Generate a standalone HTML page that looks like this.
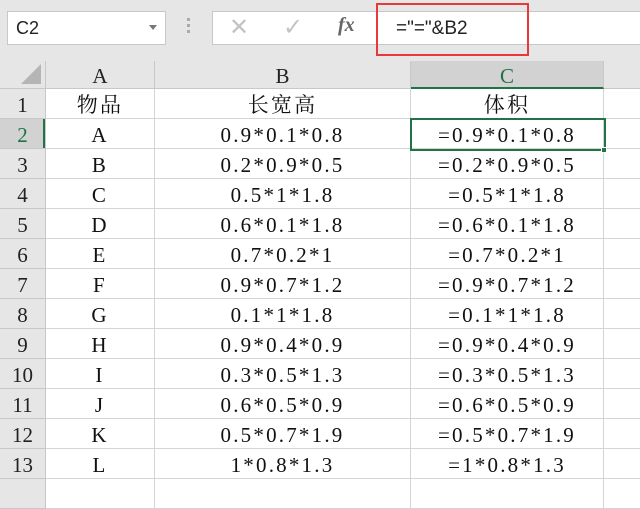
<!DOCTYPE html>
<html><head><meta charset="utf-8"><style>
*{margin:0;padding:0;box-sizing:border-box}
body{width:640px;height:486px;overflow:hidden;background:#fff;position:relative;font-family:"Liberation Serif","Noto Serif CJK SC",serif}
.top{position:absolute;left:0;top:0;width:640px;height:61px;background:#e6e6e6}
.nb{position:absolute;left:7px;top:11px;width:159px;height:34px;background:#fff;border:1px solid #c8c8c8;font:18px "Liberation Sans",sans-serif;padding:6px 0 0 8px;color:#222}
.fb{position:absolute;left:212px;top:11px;width:430px;height:34px;background:#fff;border:1px solid #c8c8c8}
.red{position:absolute;left:376px;top:3px;width:153px;height:53px;border:2px solid #e8383a}
.ftext{position:absolute;left:396px;top:18px;font:19px "Liberation Sans",sans-serif;color:#222}
.hdr{position:absolute;top:61px;height:28px;background:#e6e6e6;border-right:1px solid #c8c8c8;border-bottom:1px solid #c8c8c8;text-align:center;font-size:21px;line-height:30px;color:#222}
.rh{position:absolute;left:0;width:46px;height:30px;background:#e6e6e6;border-right:1px solid #c8c8c8;border-bottom:1px solid #c8c8c8;text-align:center;font-size:21px;line-height:32px;color:#222}
.c{position:absolute;height:30px;border-right:1px solid #d4d4d4;border-bottom:1px solid #d4d4d4;text-align:center;font-size:21px;line-height:32px;color:#111;letter-spacing:2.2px;white-space:nowrap}
</style></head><body>
<div class="top"></div>
<div class="nb">C2<span style="position:absolute;right:8px;top:13px;width:0;height:0;border-left:4px solid transparent;border-right:4px solid transparent;border-top:5px solid #777"></span></div>
<div style="position:absolute;left:187px;top:18px;width:3px;height:3px;background:#aaa;box-shadow:0 6px #aaa,0 12px #aaa"></div>
<div class="fb"></div>
<div style="position:absolute;left:229px;top:13px;font:24px 'Liberation Sans',sans-serif;color:#c4c4c4">✕</div>
<div style="position:absolute;left:283px;top:13px;font:24px 'Liberation Sans',sans-serif;color:#c4c4c4">✓</div>
<div style="position:absolute;left:338px;top:14px;font:italic bold 20px 'Liberation Serif',serif;color:#666">fx</div>
<div class="red"></div>
<div class="ftext">="="&amp;B2</div>
<div class="hdr" style="left:0;width:46px"><div style="position:absolute;right:4px;bottom:4px;width:0;height:0;border-left:20px solid transparent;border-bottom:20px solid #b5b5b5"></div></div>
<div class="hdr" style="left:46px;width:109px">A</div>
<div class="hdr" style="left:155px;width:256px">B</div>
<div class="hdr" style="left:411px;width:193px;background:#d2d2d2;border-bottom:2px solid #217346;color:#217346">C</div>
<div class="hdr" style="left:604px;width:40px"></div>
<div id="g"></div>
<script>
var d=[["物品","长宽高","体积"],["A","0.9*0.1*0.8","=0.9*0.1*0.8"],["B","0.2*0.9*0.5","=0.2*0.9*0.5"],["C","0.5*1*1.8","=0.5*1*1.8"],["D","0.6*0.1*1.8","=0.6*0.1*1.8"],["E","0.7*0.2*1","=0.7*0.2*1"],["F","0.9*0.7*1.2","=0.9*0.7*1.2"],["G","0.1*1*1.8","=0.1*1*1.8"],["H","0.9*0.4*0.9","=0.9*0.4*0.9"],["I","0.3*0.5*1.3","=0.3*0.5*1.3"],["J","0.6*0.5*0.9","=0.6*0.5*0.9"],["K","0.5*0.7*1.9","=0.5*0.7*1.9"],["L","1*0.8*1.3","=1*0.8*1.3"]];
var h="",x=[46,155,411,604],w=[109,256,193,40];
for(var i=0;i<14;i++){var t=89+30*i;
h+='<div class="rh" style="top:'+t+'px;'+(i==1?'background:#d2d2d2;color:#217346;border-left:0;box-shadow:inset -2px 0 #217346':'')+'">'+(i<13?i+1:"")+'</div>';
for(var j=0;j<4;j++){var s=(i<13&&j<3)?d[i][j]:"";h+='<div class="c" style="left:'+x[j]+'px;top:'+t+'px;width:'+w[j]+'px">'+s+'</div>';}}
document.getElementById("g").innerHTML=h;
</script>
<div style="position:absolute;left:410px;top:118px;width:196px;height:33px;border:2px solid #217346"></div>
<div style="position:absolute;left:601px;top:147px;width:6px;height:6px;background:#217346;border:1px solid #fff"></div>
</body></html>
